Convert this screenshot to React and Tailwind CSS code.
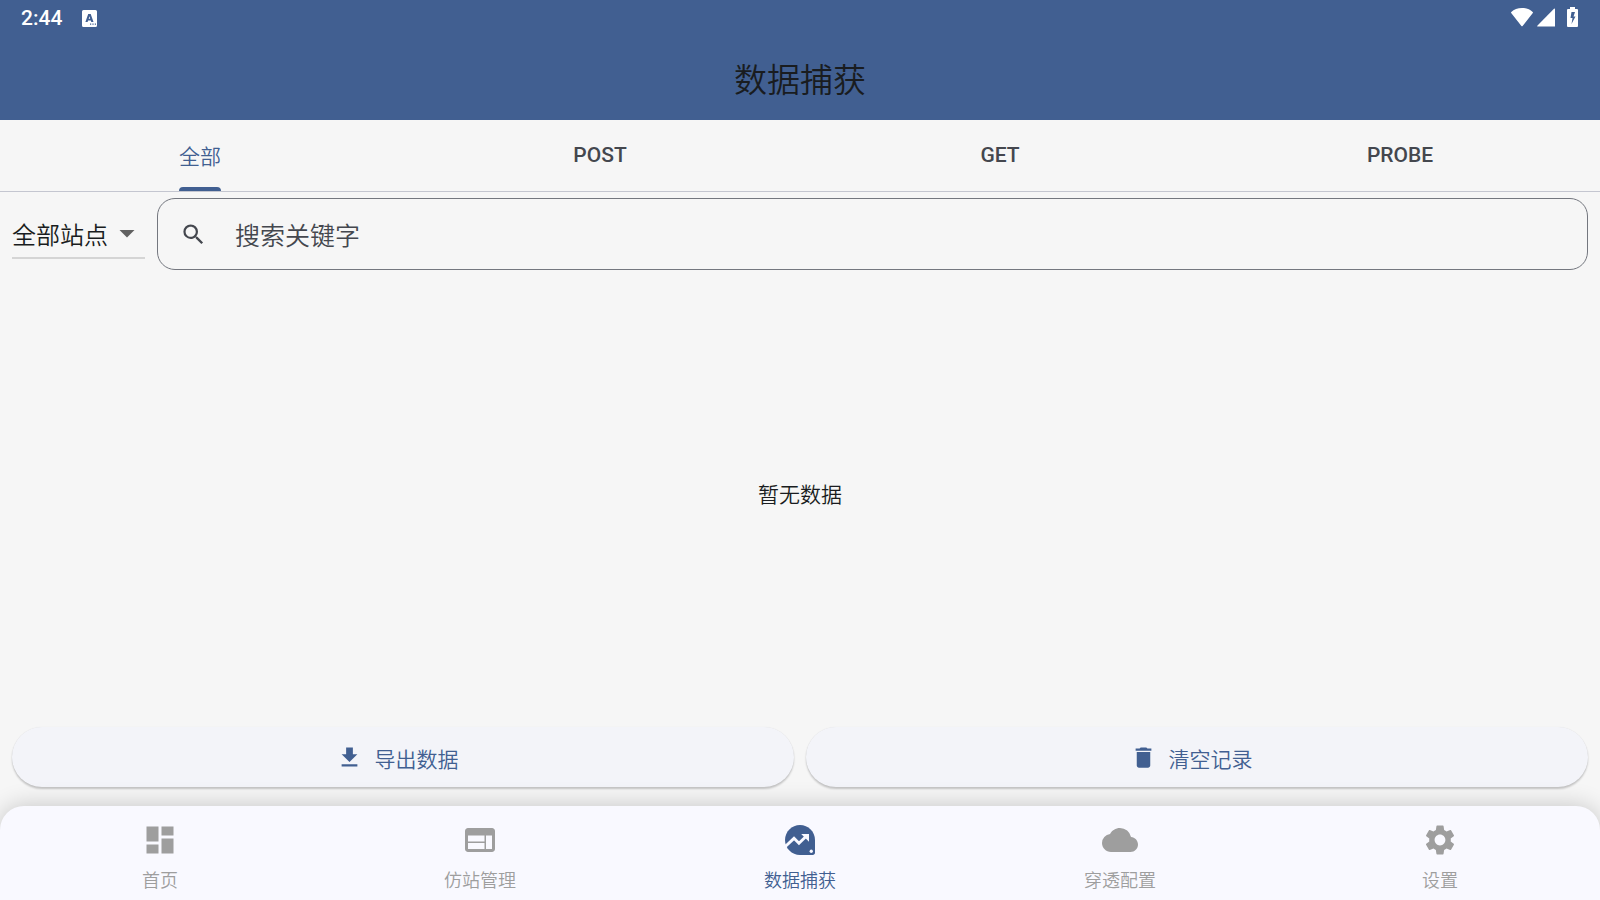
import { MdDashboard, MdWeb, MdCloud, MdSettings, MdDelete, MdFileDownload, MdSearch, MdArrowDropDown } from "react-icons/md";

const sites = ["全部站点"];
const tabs = ["全部", "POST", "GET", "PROBE"];

function KeyboardIcon() {
  return (
    <svg viewBox="0 0 15 17" className="w-[15px] h-[17px]" aria-hidden="true">
      <path
        fill="white"
        fillRule="evenodd"
        d="M1.5 0h12A1.5 1.5 0 0 1 15 1.500v14a1.500 1.500 0 0 1-1.500 1.500h-12A1.500 1.500 0 0 1 0 15.500v-14A1.500 1.500 0 0 1 1.500 0zM6.200 4L3.400 12h2.200l.5-1.500h2.700l.5 1.500h2.200L8.700 4zM6.700 8.700l.75-2.500.75 2.500zM8 13.500v1.200h1.200v-1.200zM10.400 13.500v1.200h1.200v-1.200zM12.800 13.500v1.200h1.200v-1.200z"
      />
    </svg>
  );
}

function StatusIcons() {
  return (
    <div className="flex items-center gap-1 pb-[2px]" aria-hidden="true">
      <svg viewBox="0 0 22 19" className="w-[22px] h-[19px]" fill="white">
        <path d="M11 0C6.700 0 2.900 1.500 0.300 4Q-0.200 4.500 0.200 5L10.400 18Q11 18.700 11.600 18L21.800 5Q22.200 4.500 21.700 4C19.100 1.500 15.300 0 11 0z" />
      </svg>
      <svg viewBox="0 0 18 19" className="w-[18px] h-[19px]" fill="white">
        <path d="M17 0.800Q18 0 18 1.300V18.500H0.800Q-0.300 18.500 0.500 17.500z" />
      </svg>
      <svg viewBox="0 0 11 20" className="ml-2 w-[11px] h-[20px]" fill="white">
        <path fillRule="evenodd" d="M3 0h5v2h2a1 1 0 0 1 1 1v16a1 1 0 0 1-1 1H1a1 1 0 0 1-1-1V3a1 1 0 0 1 1-1h2zM4.500 5L3.500 11h2l-1 6L8.500 9.500h-2L8 5z" />
      </svg>
    </div>
  );
}

function CaptureIcon({ className }) {
  return (
    <svg viewBox="0 0 24 24" className={className} aria-hidden="true">
      <path
        fill="currentColor"
        d="M12 2C6.480 2 2 6.480 2 12s4.480 10 10 10h8.500c.83 0 1.500-.67 1.500-1.500V12c0-5.520-4.480-10-10-10z"
      />
      <path fill="none" stroke="#f9f9ff" strokeWidth="1.900" d="M1.500 17L8 10.900L11.300 14.200L16.300 9.300" />
      <path fill="#f9f9ff" d="M12.800 8H18v5.200z" />
      <circle cx="19.500" cy="19.500" r="1.100" fill="#f9f9ff" />
    </svg>
  );
}

const navItems = [
  { label: "首页", Icon: MdDashboard },
  { label: "仿站管理", Icon: MdWeb },
  { label: "数据捕获", Icon: CaptureIcon, active: true },
  { label: "穿透配置", Icon: MdCloud },
  { label: "设置", Icon: MdSettings },
];

function ActionButton({ Icon, children }) {
  return (
    <button
      type="button"
      className="flex h-[60px] flex-1 items-center justify-center gap-3 rounded-full bg-[#f3f4f9] pr-3 text-[21px] text-[#415f91] shadow-[0_2px_2px_rgba(0,0,0,0.2),0_0_1px_rgba(0,0,0,0.1)]"
    >
      <Icon className="size-[27px]" aria-hidden="true" />
      <span className="pt-2">{children}</span>
    </button>
  );
}

export default function App() {
  return (
    <div className="flex min-h-screen flex-col bg-[#f6f6f6] font-['Roboto','Noto_Sans_CJK_SC',sans-serif] font-[350] text-[#191c20]">
      <header className="bg-[#415f91]">
        <div className="flex h-9 items-center justify-between pl-[21px] pr-[22px] text-white">
          <div className="flex items-center gap-5">
            <span className="pt-[2px] text-[21px] font-medium">2:44</span>
            <KeyboardIcon />
          </div>
          <StatusIcons />
        </div>
        <h1 className="flex h-[84px] items-center justify-center pt-[6px] text-[33px] font-[350]">数据捕获</h1>
      </header>

      <div role="tablist" className="grid h-[72px] grid-cols-4 border-b border-[#c4c6d0]">
        {tabs.map((tab, i) => (
          <button
            key={tab}
            type="button"
            role="tab"
            aria-selected={i === 0}
            className={
              i === 0
                ? "flex justify-center text-[21px] text-[#415f91]"
                : "flex items-center justify-center text-[21px] font-medium text-[#44474e]"
            }
          >
            {i === 0 ? (
              <span className="flex h-full flex-col">
                <span className="flex flex-1 items-center pt-2">{tab}</span>
                <span className="h-1 rounded-t-[4px] bg-[#415f91]" />
              </span>
            ) : (
              tab
            )}
          </button>
        ))}
      </div>

      <div className="flex items-center gap-3 px-3 pt-[6px]">
        <label className="relative flex w-[133px] items-center border-b-2 border-[#d5d5d5]">
          <select aria-label="站点" className="h-12 w-full appearance-none bg-transparent pt-[6px] text-[24px] outline-none">
            {sites.map((s) => (
              <option key={s}>{s}</option>
            ))}
          </select>
          <MdArrowDropDown className="pointer-events-none absolute right-0 size-9 text-[#616161]" aria-hidden="true" />
        </label>
        <label className="flex h-[72px] flex-1 items-center rounded-[18px] border border-[#74777f] pl-[22px] pr-6">
          <MdSearch className="size-[27px] text-[#44474e]" aria-hidden="true" />
          <input
            type="text"
            aria-label="搜索关键字"
            placeholder="搜索关键字"
            className="ml-7 h-full flex-1 bg-transparent pt-1 text-[25px] outline-none placeholder:text-[#44474e]"
          />
        </label>
      </div>

      <main className="flex flex-1 items-center justify-center pb-[6px] text-[21px]">
        <p>暂无数据</p>
      </main>

      <div className="flex gap-3 px-3 pb-[19px]">
        <ActionButton Icon={MdFileDownload}>导出数据</ActionButton>
        <ActionButton Icon={MdDelete}>清空记录</ActionButton>
      </div>

      <nav className="grid h-[94px] grid-cols-5 rounded-t-[24px] bg-[#f9f9ff] shadow-[0_0_24px_rgba(0,0,0,0.2)]">
        {navItems.map(({ label, Icon, active }) => (
          <a
            key={label}
            href="#"
            aria-current={active ? "page" : undefined}
            className={
              active
                ? "flex flex-col items-center gap-[9px] pt-4 text-[18px] text-[#415f91]"
                : "flex flex-col items-center gap-[9px] pt-4 text-[18px] text-[#9e9e9e]"
            }
          >
            <Icon className="size-9" aria-hidden="true" />
            <span>{label}</span>
          </a>
        ))}
      </nav>
    </div>
  );
}
